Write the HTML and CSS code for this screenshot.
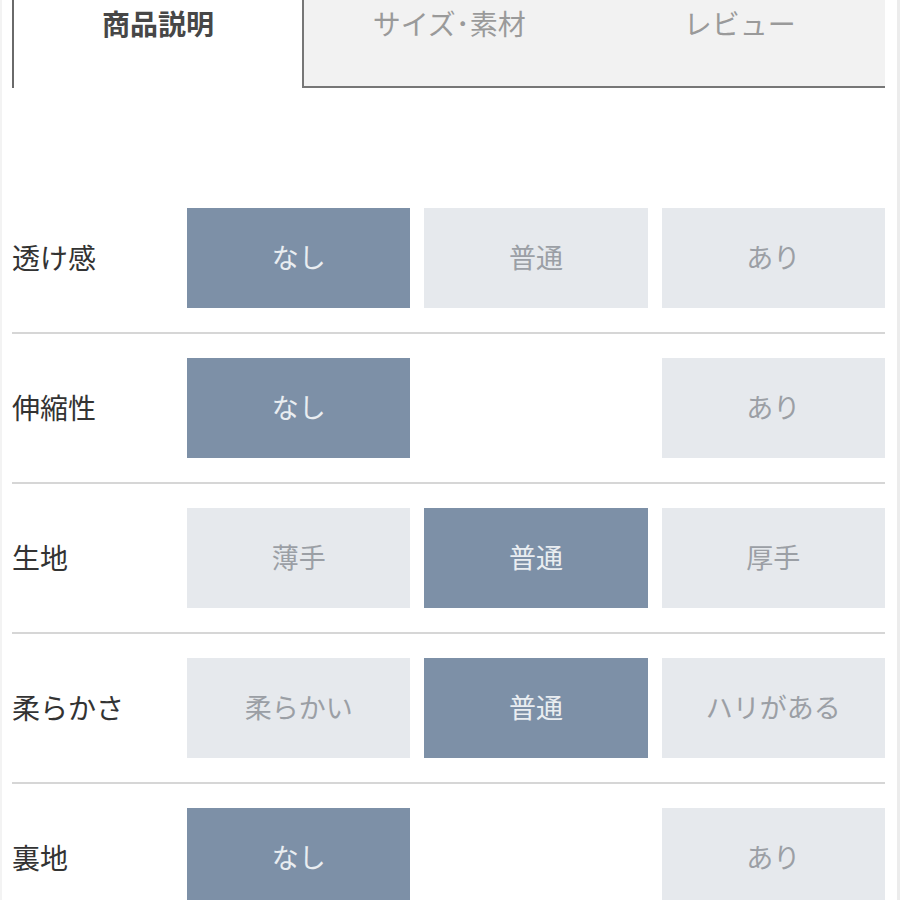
FILE: index.html
```html
<!DOCTYPE html>
<html lang="ja">
<head>
<meta charset="utf-8">
<link rel="stylesheet" href="styles.css">
</head>
<body>
<div class="page">
  <div class="tabs">
    <div class="tab active">商品説明</div>
    <div class="tab-group">
      <div class="tab">サイズ･素材</div>
      <div class="tab">レビュー</div>
    </div>
  </div>
  <div class="spec">
    <div class="row">
      <div class="label">透け感</div>
      <div class="opt on">なし</div>
      <div class="opt">普通</div>
      <div class="opt">あり</div>
    </div>
    <div class="row">
      <div class="label">伸縮性</div>
      <div class="opt on">なし</div>
      <div class="empty"></div>
      <div class="opt">あり</div>
    </div>
    <div class="row">
      <div class="label">生地</div>
      <div class="opt">薄手</div>
      <div class="opt on">普通</div>
      <div class="opt">厚手</div>
    </div>
    <div class="row">
      <div class="label">柔らかさ</div>
      <div class="opt">柔らかい</div>
      <div class="opt on">普通</div>
      <div class="opt">ハリがある</div>
    </div>
    <div class="row">
      <div class="label">裏地</div>
      <div class="opt on">なし</div>
      <div class="empty"></div>
      <div class="opt">あり</div>
    </div>
  </div>
</div>
</body>
</html>
```

FILE: styles.css
```css
html, body {
  margin: 0;
  padding: 0;
  background: #ffffff;
}
body {
  font-family: "Noto Sans CJK JP", "Noto Sans", sans-serif;
  width: 900px;
  height: 900px;
  overflow: hidden;
}
.page {
  box-sizing: border-box;
  width: 900px;
  height: 900px;
  padding: 0 12px 0 12px;
  border-right: 3px solid #ececec;
  background: linear-gradient(to right, #f3f3f3 0, #f3f3f3 2px, #ffffff 2px) no-repeat;
}
.tabs {
  display: flex;
  height: 88px;
}
.tab {
  box-sizing: border-box;
  flex: 1;
  text-align: center;
  font-size: 28px;
  line-height: 34px;
  padding-top: 6px;
  color: #9a9a9a;
}
.tab.active {
  flex: 0 0 290px;
  border-left: 2px solid #6a6a6a;
  color: #474747;
  font-weight: 700;
}
.tab-group {
  flex: 1;
  display: flex;
  background: #f2f2f2;
  border-left: 2px solid #777777;
  border-bottom: 2px solid #777777;
  box-sizing: border-box;
}
.spec {
  padding-top: 96px;
}
.row {
  display: grid;
  grid-template-columns: 161px repeat(3, 1fr);
  column-gap: 14px;
  align-items: center;
  padding: 24px 0;
  border-bottom: 2px solid #d6d6d6;
}
.label {
  font-size: 28px;
  line-height: 34px;
  padding-bottom: 3px;
  color: #333333;
}
.opt, .empty {
  box-sizing: border-box;
  height: 100px;
  display: flex;
  align-items: center;
  justify-content: center;
  font-size: 27px;
  padding-bottom: 3px;
}
.opt {
  background: #e6e9ed;
  color: #9b9fa5;
}
.opt.on {
  background: #7d90a7;
  color: #e9edf1;
}
```
